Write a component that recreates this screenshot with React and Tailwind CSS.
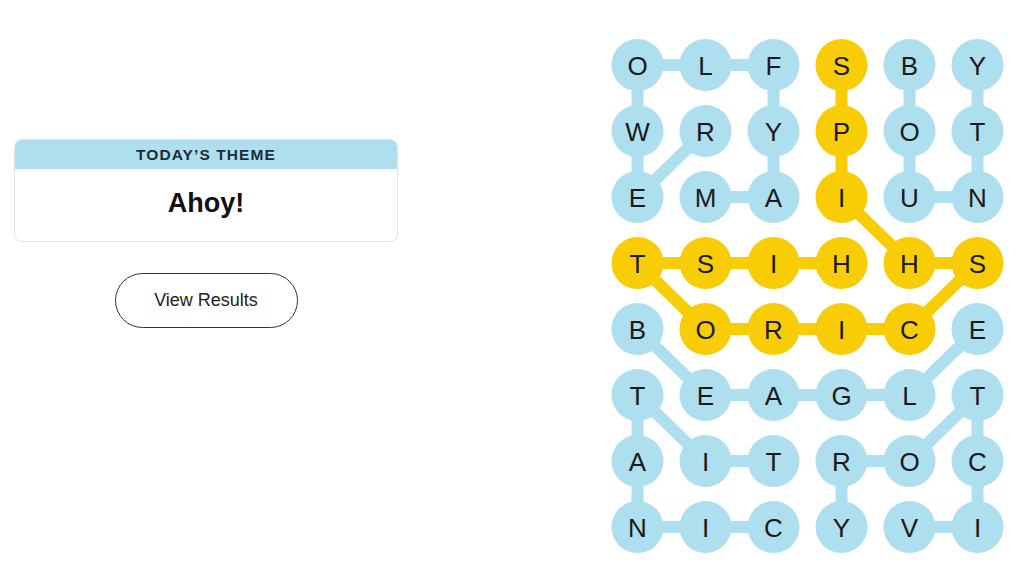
const GRID = [
  "OLFSBY",
  "WRYPOT",
  "EMAIUN",
  "TSIHHS",
  "BORICE",
  "TEAGLT",
  "AITROC",
  "NICYVI",
];

const BLUE = "#aedfee";
const YELLOW = "#f8cd05";

// [col, row] paths for each found word
const WORDS = [
  { color: BLUE, path: [[1, 2], [2, 2], [2, 1], [2, 0], [1, 0], [0, 0], [0, 1], [0, 2], [1, 1]] },
  { color: BLUE, path: [[4, 0], [4, 1], [4, 2], [5, 2], [5, 1], [5, 0]] },
  { color: YELLOW, path: [[3, 0], [3, 1], [3, 2], [4, 3], [5, 3], [4, 4], [3, 4], [2, 4], [1, 4], [0, 3], [1, 3], [2, 3], [3, 3]] },
  { color: BLUE, path: [[0, 4], [1, 5], [2, 5], [3, 5], [4, 5], [5, 4]] },
  { color: BLUE, path: [[2, 6], [1, 6], [0, 5], [0, 6], [0, 7], [1, 7], [2, 7]] },
  { color: BLUE, path: [[4, 7], [5, 7], [5, 6], [5, 5], [4, 6], [3, 6], [3, 7]] },
];

const cx = (c) => 29.5 + c * 68;
const cy = (r) => 29 + r * 66;

const colorAt = {};
WORDS.forEach((w) => w.path.forEach(([c, r]) => (colorAt[`${c}-${r}`] = w.color)));

const Board = () => (
  <svg width="400" height="524" viewBox="0 0 400 524" className="shrink-0">
    {WORDS.map((w, i) => (
      <polyline
        key={i}
        points={w.path.map(([c, r]) => `${cx(c)},${cy(r)}`).join(" ")}
        fill="none"
        stroke={w.color}
        strokeWidth="12"
        strokeLinejoin="round"
      />
    ))}
    {GRID.map((row, r) =>
      row.split("").map((ch, c) => (
        <g key={`${c}-${r}`}>
          <circle cx={cx(c)} cy={cy(r)} r="26" fill={colorAt[`${c}-${r}`]} />
          <text
            x={cx(c)}
            y={cy(r) + 9.5}
            textAnchor="middle"
            fontSize="26"
            fill="#1a1a1a"
            fontFamily="'Liberation Sans', Arial, sans-serif"
          >
            {ch}
          </text>
        </g>
      ))
    )}
  </svg>
);

const App = () => {
  return (
    <div className="w-[1024px] h-[576px] bg-white flex overflow-hidden font-['Liberation_Sans',Arial,sans-serif]">
      <div className="ml-[14px] mt-[139px] w-[384px] flex flex-col items-center">
        <div className="w-full rounded-lg border border-[#e3e3e3] overflow-hidden bg-white">
          <div className="h-[29px] bg-[#aedfee] flex items-center justify-center">
            <p className="text-[15.5px] font-bold tracking-[0.07em] text-[#1d2b36] leading-none">
              TODAY’S THEME
            </p>
          </div>
          <div className="h-[72px] flex items-center justify-center pb-[3px]">
            <p className="text-[27px] font-bold text-[#111] leading-none">Ahoy!</p>
          </div>
        </div>
        <button className="mt-[31px] w-[183px] h-[55px] rounded-full border-[1.5px] border-[#333] text-[18px] text-[#222]">
          View Results
        </button>
      </div>
      <div className="ml-auto mr-[16px] mt-[36px]">
        <Board />
      </div>
    </div>
  );
};

export default App;
